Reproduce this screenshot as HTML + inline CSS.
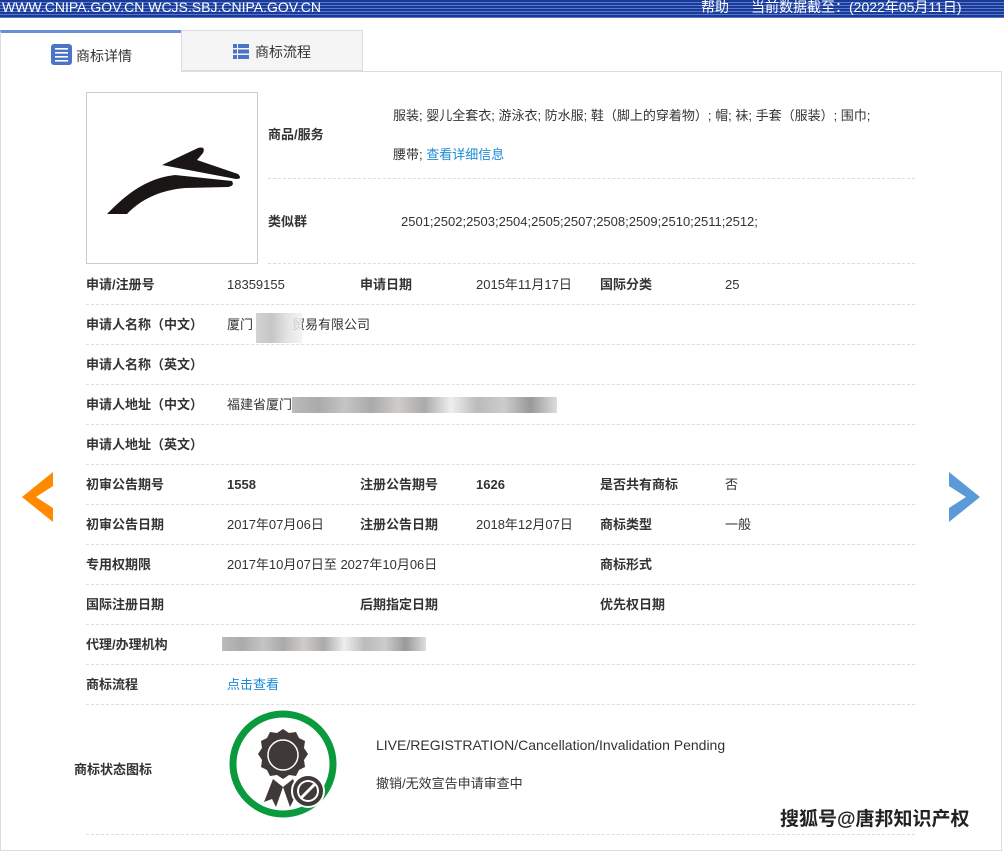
<!DOCTYPE html>
<html><head><meta charset="utf-8"><style>
*{margin:0;padding:0;box-sizing:border-box}
body{width:1004px;height:839px;overflow:hidden;background:#fff;font-family:"Liberation Sans","Noto Sans CJK SC",sans-serif;font-size:13px;color:#333;position:relative}
.top{position:absolute;left:0;top:0;width:1004px;height:18px;background:repeating-linear-gradient(#1a3a9a 0,#1a3a9a 2px,#5a78c8 2px,#5a78c8 3px);color:#fff;font-size:14px;line-height:15px}
.a{position:absolute}
.tab1{left:0;top:30px;width:181px;height:42px;border-top:3px solid #6b8fd0;border-left:1px solid #ddd;background:#fff;z-index:2}
.tab2{left:181px;top:30px;width:182px;height:41px;border:1px solid #ddd;background:#f5f5f5}
.box{left:0;top:71px;width:1002px;height:780px;border:1px solid #ddd}
.l,.v{position:absolute;color:#333;line-height:16px;height:16px;white-space:nowrap}
.l{font-weight:bold}
.d{position:absolute;left:86px;width:829px;border-top:1px dashed #ddd;height:0}
.lk{color:#1a8ad4}
.blur{position:absolute;height:16px;background:linear-gradient(90deg,#bbb,#aaa,#c5c5c5,#aaa,#d0ccc8,#aaa,#eee,#bbb,#ccc,#999,#ddd)}
</style></head><body>
<div class="top"><span class="a" style="left:2px;top:0">WWW.CNIPA.GOV.CN WCJS.SBJ.CNIPA.GOV.CN</span><span class="a" style="left:701px;top:0">帮助</span><span class="a" style="left:751px;top:0">当前数据截至：(2022年05月11日)</span></div>
<div class="a box"></div>
<div class="a tab2"><svg class="a" style="left:51px;top:13px" width="16" height="15"><rect x="0" y="0" width="4" height="4" fill="#4a74c8"/><rect x="5" y="0" width="11" height="4" fill="#4a74c8"/><rect x="0" y="5.5" width="4" height="4" fill="#4a74c8"/><rect x="5" y="5.5" width="11" height="4" fill="#4a74c8"/><rect x="0" y="11" width="4" height="4" fill="#4a74c8"/><rect x="5" y="11" width="11" height="4" fill="#4a74c8"/></svg><span class="a" style="left:73px;top:11px;font-size:14px">商标流程</span></div>
<div class="a tab1"><svg class="a" style="left:50px;top:11px" width="21" height="21"><rect x="0" y="0" width="21" height="21" rx="3" fill="#4a74c8"/><rect x="4" y="4" width="13" height="1.6" fill="#fff"/><rect x="4" y="8" width="13" height="1.6" fill="#fff"/><rect x="4" y="12" width="13" height="1.6" fill="#fff"/><rect x="4" y="16" width="13" height="1.6" fill="#fff"/></svg><span class="a" style="left:75px;top:13px;font-size:14px">商标详情</span></div>

<div class="a" style="left:86px;top:92px;width:172px;height:172px;border:1px solid #ccc">
<svg width="170" height="170" viewBox="0 0 170 170"><g transform="translate(-87,-93)">
<path d="M162 165 L198 148 Q206 146 203 153 L197 160 L238 174 Q243 179 236 179 Z" fill="#1a1616"/>
<path d="M107 214 C130 190 150 178 175 175 L232 181 Q235 186 228 187 L185 188 C160 190 140 200 127 214 Z" fill="#1a1616"/>
</g></svg></div>

<span class="l" style="left:268px;top:127px">商品/服务</span>
<span class="v" style="left:393px;top:108px">服装; 婴儿全套衣; 游泳衣; 防水服; 鞋（脚上的穿着物）; 帽; 袜; 手套（服装）; 围巾;</span>
<span class="v" style="left:393px;top:147px">腰带; <span class="lk">查看详细信息</span></span>
<div class="d" style="left:268px;width:647px;top:178px"></div>
<span class="l" style="left:268px;top:214px">类似群</span>
<span class="v" style="left:401px;top:214px">2501;2502;2503;2504;2505;2507;2508;2509;2510;2511;2512;</span>
<div class="d" style="left:268px;width:647px;top:263px"></div>

<span class="l" style="left:86px;top:277px">申请/注册号</span><span class="v" style="left:227px;top:277px">18359155</span>
<span class="l" style="left:360px;top:277px">申请日期</span><span class="v" style="left:476px;top:277px">2015年11月17日</span>
<span class="l" style="left:600px;top:277px">国际分类</span><span class="v" style="left:725px;top:277px">25</span>
<div class="d" style="top:304px"></div>
<span class="l" style="left:86px;top:317px">申请人名称（中文）</span><span class="v" style="left:227px;top:317px">厦门　　　贸易有限公司</span>
<div class="a" style="left:256px;top:313px;width:46px;height:30px;background:linear-gradient(90deg,#ccc,#bbb,#ddd,#f2f2f2);opacity:.85"></div>
<div class="d" style="top:344px"></div>
<span class="l" style="left:86px;top:357px">申请人名称（英文）</span>
<div class="d" style="top:384px"></div>
<span class="l" style="left:86px;top:397px">申请人地址（中文）</span><span class="v" style="left:227px;top:397px">福建省厦门</span>
<div class="blur" style="left:292px;top:397px;width:265px"></div>
<div class="d" style="top:424px"></div>
<span class="l" style="left:86px;top:437px">申请人地址（英文）</span>
<div class="d" style="top:464px"></div>
<span class="l" style="left:86px;top:477px">初审公告期号</span><span class="v" style="left:227px;top:477px;font-weight:bold">1558</span>
<span class="l" style="left:360px;top:477px">注册公告期号</span><span class="v" style="left:476px;top:477px;font-weight:bold">1626</span>
<span class="l" style="left:600px;top:477px">是否共有商标</span><span class="v" style="left:725px;top:477px">否</span>
<div class="d" style="top:504px"></div>
<span class="l" style="left:86px;top:517px">初审公告日期</span><span class="v" style="left:227px;top:517px">2017年07月06日</span>
<span class="l" style="left:360px;top:517px">注册公告日期</span><span class="v" style="left:476px;top:517px">2018年12月07日</span>
<span class="l" style="left:600px;top:517px">商标类型</span><span class="v" style="left:725px;top:517px">一般</span>
<div class="d" style="top:544px"></div>
<span class="l" style="left:86px;top:557px">专用权期限</span><span class="v" style="left:227px;top:557px">2017年10月07日至 2027年10月06日</span>
<span class="l" style="left:600px;top:557px">商标形式</span>
<div class="d" style="top:584px"></div>
<span class="l" style="left:86px;top:597px">国际注册日期</span><span class="l" style="left:360px;top:597px">后期指定日期</span><span class="l" style="left:600px;top:597px">优先权日期</span>
<div class="d" style="top:624px"></div>
<span class="l" style="left:86px;top:637px">代理/办理机构</span>
<div class="blur" style="left:222px;top:637px;width:204px;height:14px"></div>
<div class="d" style="top:664px"></div>
<span class="l" style="left:86px;top:677px">商标流程</span><span class="v lk" style="left:227px;top:677px">点击查看</span>
<div class="d" style="top:704px"></div>
<span class="l" style="left:74px;top:762px">商标状态图标</span>
<svg class="a" style="left:228px;top:709px" width="110" height="110"><circle cx="55" cy="55" r="50" fill="none" stroke="#0a9a3e" stroke-width="7"/>
<path d="M55 20 l6 4 7-1 3 6 6 3-1 7 4 6-4 6 1 7-6 3-3 6-7-1-6 4-6-4-7 1-3-6-6-3 1-7-4-6 4-6-1-7 6-3 3-6 7 1z" fill="#3f3a38"/>
<circle cx="55" cy="46" r="15" fill="none" stroke="#fff" stroke-width="1.5"/>
<path d="M45 70 L36 93 L44 90 L48 98 L55 78 Z M65 70 L74 93 L66 90 L62 98 L55 78 Z" fill="#3f3a38"/>
<circle cx="80" cy="82" r="16" fill="#3f3a38" stroke="#fff" stroke-width="2"/><circle cx="80" cy="82" r="11" fill="#fff"/><circle cx="80" cy="82" r="9" fill="#3f3a38"/><path d="M73 89 L87 75" stroke="#fff" stroke-width="3"/></svg>
<span class="v" style="left:376px;top:737px;font-size:14px">LIVE/REGISTRATION/Cancellation/Invalidation Pending</span>
<span class="v" style="left:376px;top:776px">撤销/无效宣告申请审查中</span>
<div class="d" style="top:834px"></div>

<svg class="a" style="left:22px;top:472px" width="32" height="50"><path d="M31 0 L0 25 L31 50 L31 36 L14 25 L31 14Z" fill="#ff8a00"/></svg>
<svg class="a" style="left:948px;top:472px" width="32" height="50"><path d="M1 0 L32 25 L1 50 L1 36 L18 25 L1 14Z" fill="#5a9ad8"/></svg>
<span class="a" style="left:780px;top:804px;font-size:19px;font-weight:bold;color:#222;text-shadow:1px 1px 0 #fff,-1px -1px 0 #fff,1px -1px 0 #fff,-1px 1px 0 #fff">搜狐号@唐邦知识产权</span>
</body></html>
